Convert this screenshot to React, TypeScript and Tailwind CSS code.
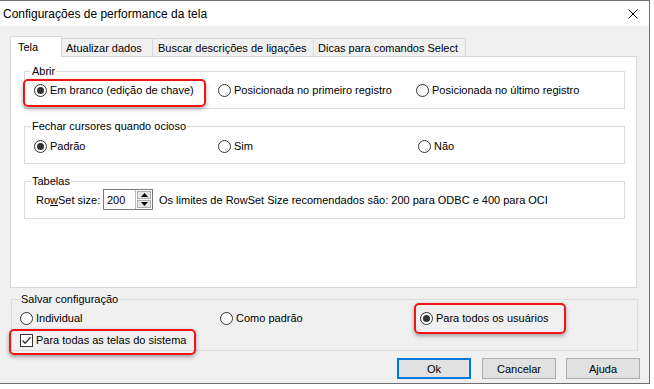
import React from "react";

function Radio({ checked, label }: { checked?: boolean; label: string }) {
  return (
    <span className="flex items-center h-[16px] whitespace-nowrap">
      <span className="w-[13px] h-[13px] rounded-full border border-[#333333] bg-white flex items-center justify-center shrink-0">
        {checked && <span className="w-[7px] h-[7px] rounded-full bg-[#333333]" />}
      </span>
      <span className="ml-[3px]">{label}</span>
    </span>
  );
}

function Checkbox({ checked, label }: { checked?: boolean; label: string }) {
  return (
    <span className="flex items-center h-[16px] whitespace-nowrap">
      <span className="w-[13px] h-[13px] border border-[#333333] bg-white flex items-center justify-center shrink-0">
        {checked && (
          <svg width="11" height="11" viewBox="0 0 11 11">
            <path d="M1.5 5.5 L4.2 8.2 L9.5 2.2" fill="none" stroke="#333333" strokeWidth="1.3" />
          </svg>
        )}
      </span>
      <span className="ml-[3px]">{label}</span>
    </span>
  );
}

function Tab({ label, active, w, pl }: { label: string; active?: boolean; w: string; pl: string }) {
  if (active) {
    return (
      <div className={`relative z-10 h-[21px] -mb-px bg-white border-l border-t border-r border-[#d9d9d9] flex items-center ${w} ${pl}`}>
        {label}
      </div>
    );
  }
  return (
    <div className={`h-[18px] bg-[#f0f0f0] border-t border-r border-[#d9d9d9] flex items-center whitespace-nowrap ${w} ${pl}`}>
      {label}
    </div>
  );
}

export default function App() {
  return (
    <div className="w-[654px] h-[389px] bg-white text-[11px] leading-[14px] text-black font-['Liberation_Sans',Arial,sans-serif] overflow-hidden">
      <div className="relative w-[650px] h-[384px] border-t border-r border-b border-[#6e6e6e] flex flex-col">
        {/* Title bar */}
        <div className="h-[25px] bg-white flex items-center justify-between pl-[3px] pr-[11px] shrink-0">
          <span className="text-[12px]">Configurações de performance da tela</span>
          <svg width="10" height="10" viewBox="0 0 10 10">
            <path d="M0.5 0.5 L9.5 9.5 M9.5 0.5 L0.5 9.5" stroke="#000" strokeWidth="1" />
          </svg>
        </div>

        {/* Body */}
        <div className="flex-1 bg-[#f0f0f0] pt-[10px] pl-[10px] flex flex-col">
          {/* Tabs */}
          <div className="flex items-end">
            <Tab label="Tela" active w="w-[52px]" pl="pl-[7px]" />
            <Tab label="Atualizar dados" w="w-[91px]" pl="pl-[4px]" />
            <Tab label="Buscar descrições de ligações" w="w-[161px]" pl="pl-[5px]" />
            <Tab label="Dicas para comandos Select" w="w-[152px]" pl="pl-[4px]" />
          </div>

          {/* Panel */}
          <div className="w-[627px] h-[232px] bg-white border border-[#d9d9d9] pl-[13px] pt-[7px] flex flex-col">
            <fieldset className="w-[601px] h-[45px] border border-[#dcdcdc]">
              <legend className="ml-[6px] px-[1px] leading-[14px]">Abrir</legend>
              <div className="flex pl-[9px] pt-[4px]">
                <div className="w-[184px]"><Radio checked label="Em branco (edição de chave)" /></div>
                <div className="w-[198px]"><Radio label="Posicionada no primeiro registro" /></div>
                <div><Radio label="Posicionada no último registro" /></div>
              </div>
            </fieldset>

            <fieldset className="mt-[10px] w-[601px] h-[45px] border border-[#dcdcdc]">
              <legend className="ml-[6px] px-[1px] leading-[14px]">Fechar cursores quando ocioso</legend>
              <div className="flex pl-[9px] pt-[5px]">
                <div className="w-[184px]"><Radio checked label="Padrão" /></div>
                <div className="w-[200px]"><Radio label="Sim" /></div>
                <div><Radio label="Não" /></div>
              </div>
            </fieldset>

            <fieldset className="mt-[10px] w-[601px] h-[45px] border border-[#dcdcdc]">
              <legend className="ml-[6px] px-[1px] leading-[14px]">Tabelas</legend>
              <div className="flex items-center pl-[11px] pt-[1px] h-[22px]">
                <span className="w-[67px] whitespace-nowrap">
                  Ro<span className="underline">w</span>Set size:
                </span>
                <div className="flex items-stretch w-[50px] h-[21px] border border-[#7a7a7a] bg-white">
                  <span className="flex-1 flex items-center pl-[3px]">200</span>
                  <div className="w-[17px] flex flex-col border-l border-[#bcbcbc] p-[1px] gap-[1px]">
                    <div className="flex-1 bg-[#e5e5e5] border border-[#adadad] flex items-center justify-center">
                      <svg width="7" height="4" viewBox="0 0 7 4"><path d="M0 4 L3.5 0 L7 4 Z" fill="#000" /></svg>
                    </div>
                    <div className="flex-1 bg-[#e5e5e5] border border-[#adadad] flex items-center justify-center">
                      <svg width="7" height="4" viewBox="0 0 7 4"><path d="M0 0 L3.5 4 L7 0 Z" fill="#000" /></svg>
                    </div>
                  </div>
                </div>
                <span className="ml-[6px] whitespace-nowrap">
                  Os limites de RowSet Size recomendados são: 200 para ODBC e 400 para OCI
                </span>
              </div>
            </fieldset>
          </div>

          {/* Salvar configuração */}
          <fieldset className="mt-[4px] ml-[1px] w-[627px] h-[59px] border border-[#dcdcdc]">
            <legend className="ml-[8px] px-[1px] leading-[14px]">Salvar configuração</legend>
            <div className="flex pl-[8px] pt-[4px]">
              <div className="w-[200px]"><Radio label="Individual" /></div>
              <div className="w-[200px]"><Radio label="Como padrão" /></div>
              <div><Radio checked label="Para todos os usuários" /></div>
            </div>
            <div className="pl-[8px] mt-[6px]">
              <Checkbox checked label="Para todas as telas do sistema" />
            </div>
          </fieldset>

          {/* Buttons */}
          <div className="mt-[7px] flex justify-end pr-[9px]">
            <button className="w-[74px] h-[21px] bg-[#e1e1e1] border-2 border-[#0078d7] flex items-center justify-center">Ok</button>
            <button className="ml-[11px] w-[74px] h-[21px] bg-[#e1e1e1] border border-[#adadad] flex items-center justify-center">Cancelar</button>
            <button className="ml-[10px] w-[74px] h-[21px] bg-[#e1e1e1] border border-[#adadad] flex items-center justify-center">
              A<span className="underline">j</span>uda
            </button>
          </div>
        </div>

        {/* Red annotation highlights */}
        <div className="absolute left-[23px] top-[78px] w-[183px] h-[28px] rounded-[5px] border-2 border-[#f01414] shadow-[0_2px_4px_rgba(0,0,0,0.35)] pointer-events-none" />
        <div className="absolute left-[414px] top-[302px] w-[152px] h-[31px] rounded-[5px] border-2 border-[#f01414] shadow-[0_2px_4px_rgba(0,0,0,0.35)] pointer-events-none" />
        <div className="absolute left-[9px] top-[328px] w-[187px] h-[26px] rounded-[5px] border-2 border-[#f01414] shadow-[0_2px_4px_rgba(0,0,0,0.35)] pointer-events-none" />
      </div>
    </div>
  );
}
